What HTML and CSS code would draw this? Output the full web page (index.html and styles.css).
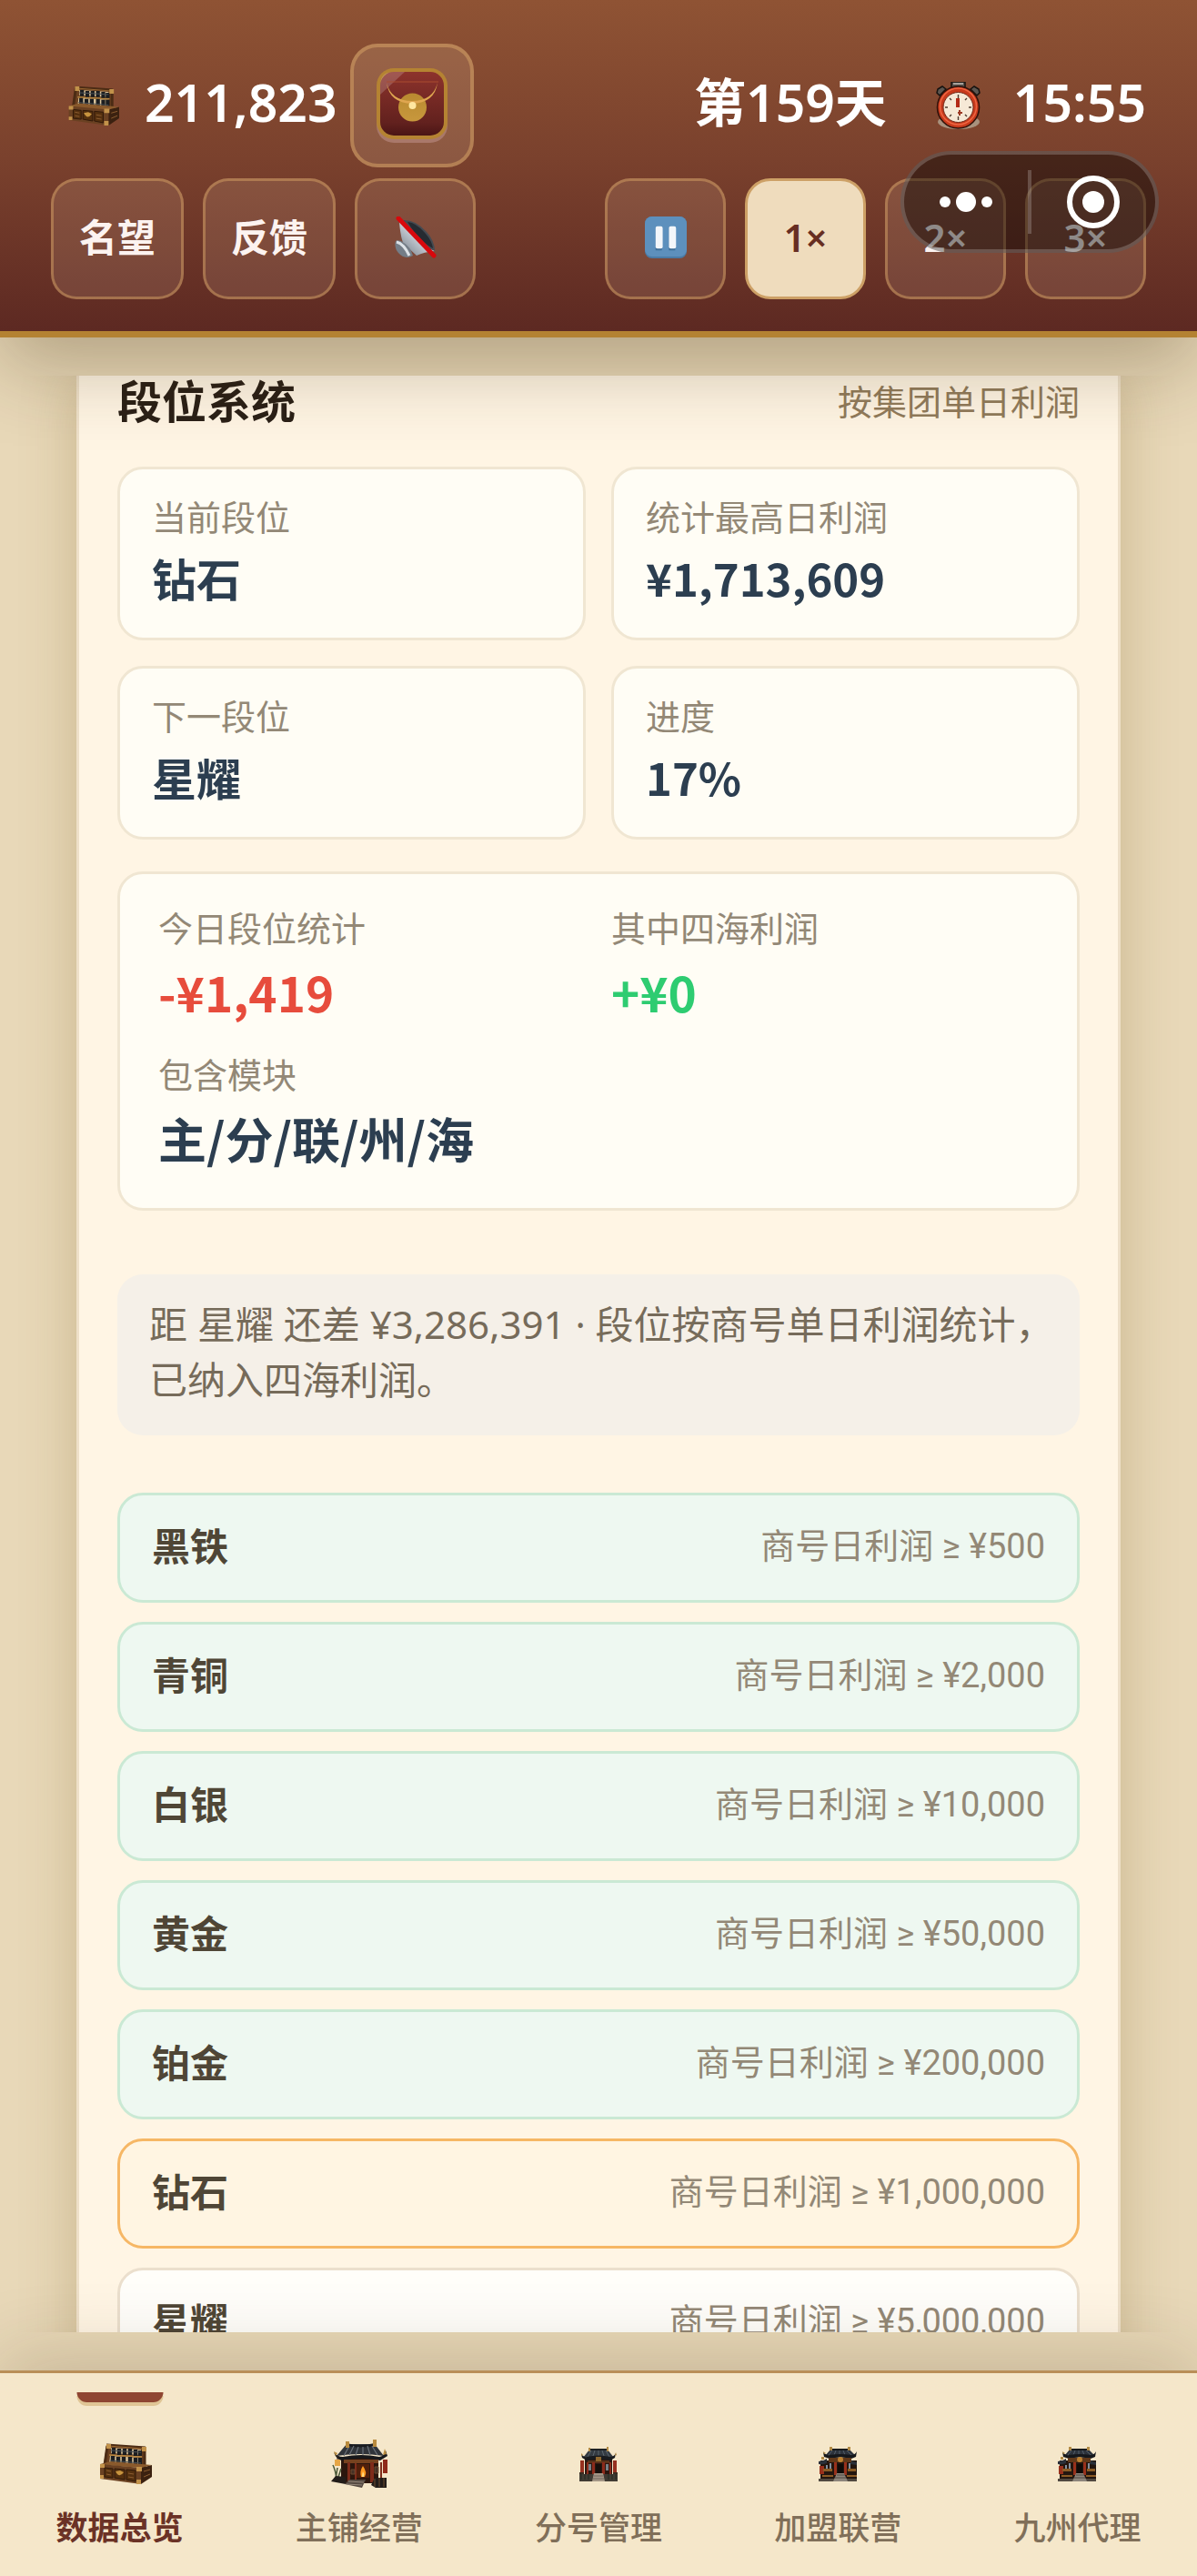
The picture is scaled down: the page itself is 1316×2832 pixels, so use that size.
FILE: index.html
```html
<!DOCTYPE html>
<html lang="zh-CN">
<head>
    <meta charset="UTF-8">
    <meta name="viewport" content="width=device-width, initial-scale=1.0">
    <title>段位系统</title>
    <link rel="stylesheet" href="styles.css">
</head>
<body>
    <!-- 图标定义 -->
    <svg class="icon-defs" aria-hidden="true">
        <symbol id="icon-abacus" viewBox="-14 0 71 44">
            <path d="M7 1 50 4 50 26 4 23Z" fill="#6b4020"/>
            <path d="M12 4 45 6 45 12 12 10Z" fill="#d9c39a"/>
            <path d="M11 13 45 15 45 24 10 22Z" fill="#d9c39a"/>
            <path d="M10 12 46 14" stroke="#b98a42" stroke-width="1.5"/>
            <path d="M15 4v7M21 5v7M27 5v7M33 5v7M39 6v7M44 7v6M14 13v9M20 14v9M26 14v9M33 14v10M39 15v9M44 15v9" stroke="#1b1d20" stroke-width="4.4"/>
            <path d="M12 7 45 9M11 18 45 21" stroke="#4a5055" stroke-width="1"/>
            <path d="M7 1 50 4M8 2 5 23M49 4V26" stroke="#4b2b14" stroke-width="3" fill="none"/>
            <path d="M9 2 48 5" stroke="#9a6832" stroke-width="1"/>
            <path d="M0 22 45 26 45 44 0 38Z" fill="#6a4122"/>
            <path d="M45 26 57 23 57 36 45 44Z" fill="#3b2110"/>
            <path d="M0 22 12 19 57 23 45 26Z" fill="#8a5a2c"/>
            <path d="M5 26 14 27 14 37 5 36ZM16 27 27 28 27 39 16 37ZM29 28 39 29 39 41 29 39Z" fill="#54300f" stroke="#2f1909"/>
            <path d="M7 29 12 30M7 33 12 34M31 32 37 33M31 36 37 37M48 30 55 28M48 36 55 33" stroke="#8b5c30" stroke-width="1"/>
            <path d="M17 30q4 8 9 1l-4-2z" fill="#c7943f"/>
            <path d="M0 22h5v4H0zM0 34h4v4H0zM40 25h6v5h-6zM40 39h5v5h-5zM7 0h5v5H7zM46 3h5v5h-5z" fill="#c2924a"/>
        </symbol>
        <symbol id="icon-shop" viewBox="0 0 62 54">
            <path d="M11 20h41v28H11z" fill="#2c160d"/>
            <path d="M17 5h31l10 13q-26-4-52 0z" fill="#30343a"/>
            <path d="M17 4q14 4 31 0v3q-16 3-31 0z" fill="#191b1f"/>
            <path d="M20 7 14 18M25 7 20 17M30 8 27 17M35 8v9M40 7l3 10M45 7l6 10" stroke="#6a7179" stroke-width="1.2"/>
            <path d="M3 14q4 5 10 5 20-4 40 0 6-1 7-7l2 6-8 5q-20-5-41 0-7 0-10-9z" fill="#17181b"/>
            <path d="M16 2h4v7h-4zM46 0h4v8h-4zM3 13l4 2-2 3zM59 10l2 6-4 1z" fill="#b98b3e"/>
            <path d="M14 22h38v4H14z" fill="#76421f"/>
            <path d="M18 25h3v21h-3zM43 25h4v22h-4zM26 26h2v18h-2zM54 25h2v20h-2z" fill="#7e2c1a"/>
            <path d="M28 27h14v15H28z" fill="#51200c"/>
            <path d="M33 41q-2-6 2-12 5 7 2 12z" fill="#ff9a1f"/>
            <path d="M34 41q0-3 1-6 2 3 1 6z" fill="#ffe08a"/>
            <path d="M57 22h5v15h-5z" fill="#8f2a1a"/>
            <path d="M7 18v5" stroke="#38281b"/>
            <path d="M4 22h6v7H4z" fill="#e6a645"/>
            <path d="M2 28q3 6 4 16M7 31 5 44M11 32 7 44" stroke="#4f5c3b" stroke-width="1.6" fill="none"/>
            <path d="M0 46l5-6 11 1v8zM44 50l4-8h13v11H49z" fill="#221c19"/>
            <path d="M20 44h18l-4 9-19-4z" fill="#554a42"/>
            <path d="M19 46l17 1M17 49l17 1" stroke="#94877a" stroke-width="1"/>
            <path d="M48 43v9M53 42v10M58 42v10M22 33h4v5h-4zM48 30h4v7h-4z" stroke="#6d4b2f" fill="#453126"/>
        </symbol>
        <symbol id="icon-branch" viewBox="0 0 42 38">
            <path d="M6 12h30v21H6z" fill="#2b1710"/>
            <path d="M11 3h20l7 9q-17-3-34 0z" fill="#343b42"/>
            <path d="M11 2h20v2H11z" fill="#1c2023"/>
            <path d="M13 4 9 11M17 4l-2 6M21 4v6M25 4l2 6M29 4l4 7" stroke="#66717a" stroke-width=".8"/>
            <path d="M2 8q3 4 6 3 13-3 26 0 4 0 6-4l-1 5-5 3q-13-3-26 0l-5-3z" fill="#191b1e"/>
            <path d="M10 1h2v4h-2zM30 0h2v5h-2zM2 7l2 2-2 1zM40 6l1 3-2 1z" fill="#b28a45"/>
            <path d="M9 15h24v3H9z" fill="#59321a"/>
            <path d="M18 11h6v5h-6z" fill="#8f682e"/>
            <path d="M14 17h3v14h-3zM25 17h3v14h-3zM8 17h2v13H8zM33 17h2v13h-2z" fill="#8b2b1b"/>
            <path d="M10 19h3v7h-3zM29 19h3v7h-3z" fill="#777f86"/>
            <path d="M18 19h6v10h-6z" fill="#160f0b"/>
            <path d="M1 15h4v13H1zM37 15h4v13h-4z" fill="#96301f"/>
            <path d="M0 28h5v4H0zM37 28h5v4h-5z" fill="#3a2c20"/>
            <path d="M0 30h42v8H0z" fill="#403b33"/>
            <path d="M2 30v6M6 30v6M10 30v6M32 30v6M36 30v6M40 30v6" stroke="#222a20"/>
            <path d="M16 29h10l2 9H14z" fill="#a49686"/>
            <path d="M16 32h10M15 35h12" stroke="#71675c"/>
        </symbol>
        <symbol id="icon-league" viewBox="0 0 42 38">
            <path d="M2 15h40v21H2z" fill="#23160f"/>
            <path d="M13 3h21l7 7q-17-2-34 0z" fill="#2c323b"/>
            <path d="M13 2h21v2H13z" fill="#15181c"/>
            <path d="M15 4l-4 5M19 4l-2 5M23 4v5M27 4l2 5M31 4l5 5" stroke="#5d6876" stroke-width=".8"/>
            <path d="M5 6q4 4 7 3 12-2 24 0 4 0 6-4l-1 6-5 2q-12-3-24 0l-6-2z" fill="#15171b"/>
            <path d="M12 0h3v4h-3zM32 0h3v4h-3zM5 5l3 2-2 1zM3 11h3v3H3z" fill="#b28a45"/>
            <path d="M0 16q5 0 9-3v5q-5 2-9 1zM35 14q4 3 7 3v3l-7-1z" fill="#2a3039"/>
            <path d="M11 12h25v5H11z" fill="#613819"/>
            <circle cx="24" cy="14" r="3" fill="#bb8032"/>
            <path d="M17 17h3v14h-3zM28 17h3v14h-3zM1 21h5v9H1z" fill="#98301b"/>
            <path d="M12 18h2v9h-2zM33 18h2v9h-2zM8 20h2v5H8z" fill="#83909e"/>
            <path d="M21 19h6v10h-6z" fill="#100b08"/>
            <path d="M5 24h10v3H5zM32 24h9v3h-9zM4 31h12v2H4zM31 31h11v2H31z" fill="#8b5b25"/>
            <path d="M0 35h42v3H0z" fill="#514940"/>
            <path d="M20 29h8l4 9H16z" fill="#8d857b"/>
            <path d="M20 31h9M18 34h12" stroke="#4e4740"/>
        </symbol>
        <symbol id="icon-clock" viewBox="0 0 49 52">
            <ellipse cx="25" cy="44" rx="23" ry="8" fill="#a8917d"/>
            <path d="M17 0h15v7H17z" fill="#55504b" stroke="#171310" stroke-width="1.5"/>
            <path d="M19 2h11" stroke="#a7a19a" stroke-width="2"/>
            <path d="M2 8 7 5 11 8 4 15 1 12ZM47 8 42 5 38 8 45 15 48 12Z" fill="#5c5650" stroke="#171310" stroke-width="1.5"/>
            <circle cx="24.5" cy="28" r="23" fill="#c83a1c" stroke="#32130b" stroke-width="1.6"/>
            <circle cx="24.5" cy="27" r="20" fill="none" stroke="#ee6541" stroke-width="1.5"/>
            <circle cx="24.5" cy="28" r="16.5" fill="#f6e9d6" stroke="#6d2717" stroke-width="1"/>
            <path d="M24.5 14v4M24.5 38v4M10 28h3M36 28h3M15 18l2 2M34 18l-2 2M15 38l2-2M34 38l-2-2" stroke="#4d3c31" stroke-width="1.4"/>
            <path d="M24 18v10" stroke="#b32a17" stroke-width="4"/>
            <path d="M26 31v6M24 34h5" stroke="#9d3a25" stroke-width="2"/>
        </symbol>
        <symbol id="icon-bag" viewBox="0 0 78 82">
            <defs>
                <linearGradient id="bagRed" x1="0" y1="0" x2="0" y2="1">
                    <stop offset="0" stop-color="#8d332c"/>
                    <stop offset=".8" stop-color="#62211e"/>
                    <stop offset="1" stop-color="#4a1515"/>
                </linearGradient>
                <linearGradient id="bagGold" x1="0" y1="0" x2="0" y2="1">
                    <stop offset="0" stop-color="#b98a30"/>
                    <stop offset="1" stop-color="#c8983d"/>
                </linearGradient>
            </defs>
            <rect y="4" width="78" height="78" rx="19" fill="#a9786a"/>
            <rect width="78" height="78" rx="19" fill="#b58332"/>
            <rect x="4" y="4" width="70" height="70" rx="15" fill="url(#bagRed)"/>
            <path d="M4 29V19Q4 4 19 4h12z" fill="#fff" opacity=".18"/>
            <circle cx="39.5" cy="43" r="15.5" fill="url(#bagGold)"/>
            <path d="M11 16q3 22 28 23 25-1 28-23-5 20-28 20Q16 36 11 16" fill="#dfa650"/>
            <path d="M11 15h57" stroke="#a94d30"/>
            <circle cx="39.5" cy="41" r="4" fill="#ffe7a0"/>
        </symbol>
        <symbol id="icon-mute" viewBox="0 0 46 46">
            <defs>
                <linearGradient id="horn" x1="0" y1="1" x2="1" y2="0">
                    <stop offset="0" stop-color="#6d7680"/>
                    <stop offset=".5" stop-color="#c5cbd3"/>
                    <stop offset="1" stop-color="#7a828c"/>
                </linearGradient>
            </defs>
            <path d="M5 6Q20 12 44 38 32 39 24 43L9 29Q6 20 5 6" fill="url(#horn)"/>
            <path d="M8 4Q23 3 35 17q9 10 9 21Q24 32 8 4" fill="#454b52"/>
            <path d="M14 6q10 1 20 13 7 8 8 16Q27 28 14 6" fill="#262b31"/>
            <path d="M1 27q4-2 9 2 7 4 10 14-9 5-16-3-5-6-3-13" fill="#747d87"/>
            <path d="M2 28q8 2 14 15" stroke="#dde2e7" stroke-width="3" fill="none"/>
            <path d="M4 2 43 43" stroke="#d8080c" stroke-width="5" stroke-linecap="round"/>
        </symbol>
        <symbol id="icon-pause" viewBox="0 0 47 47">
            <rect width="47" height="47" rx="8" fill="#4a7ba6"/>
            <rect width="47" height="45" rx="8" fill="#5d90bd"/>
            <path d="M12 13h7v25h-7zM27 13h7v25h-7z" fill="#3f6f99"/>
            <rect x="12" y="11" width="8" height="25" rx="2" fill="#f3f6fa"/>
            <rect x="27" y="11" width="8" height="25" rx="2" fill="#f3f6fa"/>
        </symbol>
    </svg>

    <div class="app">
        <!-- 顶部状态栏 -->
        <header class="topbar">
            <div class="topbar-row">
                <div class="money">
                    <svg class="money-icon"><use href="#icon-abacus"/></svg>
                    <span class="stat">211,823</span>
                    <button class="bag-btn" type="button" aria-label="锦囊">
                        <svg class="bag-icon"><use href="#icon-bag"/></svg>
                    </button>
                </div>
                <div class="date">
                    <span class="stat">第159天</span>
                    <svg class="clock-icon"><use href="#icon-clock"/></svg>
                    <span class="stat">15:55</span>
                </div>
            </div>
            <div class="topbar-row">
                <div class="btn-group">
                    <button class="ctrl-btn wide" type="button">名望</button>
                    <button class="ctrl-btn wide" type="button">反馈</button>
                    <button class="ctrl-btn" type="button" aria-label="静音">
                        <svg class="ctrl-icon"><use href="#icon-mute"/></svg>
                    </button>
                </div>
                <div class="btn-group">
                    <button class="ctrl-btn" type="button" aria-label="暂停">
                        <svg class="ctrl-icon"><use href="#icon-pause"/></svg>
                    </button>
                    <button class="ctrl-btn active" type="button">1×</button>
                    <button class="ctrl-btn" type="button">2×</button>
                    <button class="ctrl-btn" type="button">3×</button>
                </div>
            </div>

            <!-- 小程序胶囊按钮 -->
            <div class="capsule">
                <button class="capsule-btn" type="button" aria-label="更多">
                    <svg width="58" height="22" viewBox="0 0 58 22" fill="#fff">
                        <circle cx="6" cy="11" r="6"/>
                        <circle cx="29" cy="11" r="11"/>
                        <circle cx="52" cy="11" r="6"/>
                    </svg>
                </button>
                <button class="capsule-btn" type="button" aria-label="关闭">
                    <svg width="58" height="58" viewBox="0 0 58 58">
                        <circle cx="29" cy="29" r="26" fill="none" stroke="#fff" stroke-width="6"/>
                        <circle cx="29" cy="29" r="12" fill="#fff"/>
                    </svg>
                </button>
            </div>
        </header>

        <!-- 内容区域 -->
        <main class="content">
            <section class="panel">
                <div class="panel-header">
                    <h2 class="panel-title">段位系统</h2>
                    <span class="panel-sub">按集团单日利润</span>
                </div>

                <div class="card-grid">
                    <div class="card">
                        <div class="label">当前段位</div>
                        <div class="value">钻石</div>
                    </div>
                    <div class="card">
                        <div class="label">统计最高日利润</div>
                        <div class="value">¥1,713,609</div>
                    </div>
                    <div class="card">
                        <div class="label">下一段位</div>
                        <div class="value">星耀</div>
                    </div>
                    <div class="card">
                        <div class="label">进度</div>
                        <div class="value">17%</div>
                    </div>
                </div>

                <div class="summary">
                    <div>
                        <div class="label">今日段位统计</div>
                        <div class="summary-value negative">-¥1,419</div>
                    </div>
                    <div>
                        <div class="label">其中四海利润</div>
                        <div class="summary-value positive">+¥0</div>
                    </div>
                    <div>
                        <div class="label">包含模块</div>
                        <div class="summary-value">主/分/联/州/海</div>
                    </div>
                </div>

                <p class="note">距 星耀 还差 ¥3,286,391 · 段位按商号单日利润统计，已纳入四海利润。</p>

                <ul class="rank-list">
                    <li class="rank reached"><span class="rank-name">黑铁</span><span class="rank-cond">商号日利润 ≥ ¥500</span></li>
                    <li class="rank reached"><span class="rank-name">青铜</span><span class="rank-cond">商号日利润 ≥ ¥2,000</span></li>
                    <li class="rank reached"><span class="rank-name">白银</span><span class="rank-cond">商号日利润 ≥ ¥10,000</span></li>
                    <li class="rank reached"><span class="rank-name">黄金</span><span class="rank-cond">商号日利润 ≥ ¥50,000</span></li>
                    <li class="rank reached"><span class="rank-name">铂金</span><span class="rank-cond">商号日利润 ≥ ¥200,000</span></li>
                    <li class="rank current"><span class="rank-name">钻石</span><span class="rank-cond">商号日利润 ≥ ¥1,000,000</span></li>
                    <li class="rank"><span class="rank-name">星耀</span><span class="rank-cond">商号日利润 ≥ ¥5,000,000</span></li>
                </ul>
            </section>
        </main>

        <!-- 底部导航 -->
        <nav class="tabbar">
            <a href="#overview" class="tab active">
                <svg class="tab-icon"><use href="#icon-abacus"/></svg>
                <span>数据总览</span>
            </a>
            <a href="#shop" class="tab">
                <svg class="tab-icon medium"><use href="#icon-shop"/></svg>
                <span>主铺经营</span>
            </a>
            <a href="#branch" class="tab">
                <svg class="tab-icon small"><use href="#icon-branch"/></svg>
                <span>分号管理</span>
            </a>
            <a href="#league" class="tab">
                <svg class="tab-icon small"><use href="#icon-league"/></svg>
                <span>加盟联营</span>
            </a>
            <a href="#agent" class="tab">
                <svg class="tab-icon small"><use href="#icon-league"/></svg>
                <span>九州代理</span>
            </a>
        </nav>
    </div>
</body>
</html>
```
FILE: styles.css
```css
* {
    margin: 0;
    padding: 0;
    box-sizing: border-box;
}

body {
    font-family: 'Noto Sans', 'Noto Sans CJK SC', sans-serif;
    background: #e8d8b8;
    color: #2c3e50;
}

button {
    font-family: inherit;
    cursor: pointer;
}

svg {
    display: block;
}

.icon-defs {
    position: absolute;
    width: 0;
    height: 0;
}

.app {
    height: 100vh;
    display: flex;
    flex-direction: column;
    overflow: hidden;
}

/* 顶部状态栏 */
.topbar {
    position: relative;
    z-index: 10;
    display: flex;
    flex-direction: column;
    gap: 12px;
    padding: 48px 56px 35px;
    background: linear-gradient(180deg, #8f5334 0%, #7a412d 48%, #5d2922 100%);
    border-bottom: 7px solid #b48232;
    box-shadow: 0 28px 84px rgba(60, 40, 10, 0.32);
}

.topbar-row {
    display: flex;
    justify-content: space-between;
    align-items: center;
}

.money,
.date {
    display: flex;
    align-items: center;
}

.stat {
    font-size: 57px;
    line-height: 64px;
    font-weight: 600;
    color: #fff;
    padding-bottom: 8px;
}

.money {
    padding-left: 6px;
}

.money-icon {
    width: 69px;
    height: 43px;
    margin-right: 28px;
}

.bag-btn {
    width: 136px;
    height: 136px;
    margin-left: 14px;
    display: flex;
    justify-content: center;
    align-items: center;
    background: rgba(255, 235, 200, 0.14);
    border: 4px solid rgba(212, 160, 100, 0.55);
    border-radius: 30px;
}

.bag-icon {
    width: 78px;
    height: 82px;
}

.clock-icon {
    width: 49px;
    height: 52px;
    margin: 0 36px 0 54px;
}

.btn-group {
    display: flex;
    gap: 21px;
}

.ctrl-btn {
    width: 133px;
    height: 133px;
    padding-bottom: 4px;
    display: flex;
    justify-content: center;
    align-items: center;
    font-size: 42px;
    line-height: 56px;
    font-weight: 600;
    color: #fcf3f0;
    background: rgba(255, 225, 195, 0.13);
    border: 3px solid rgba(212, 160, 100, 0.5);
    border-radius: 28px;
}

.ctrl-btn.wide {
    width: 146px;
}

.ctrl-btn.active {
    color: #672e22;
    background: #efdcbd;
    border-color: #cda066;
}

.ctrl-icon {
    width: 46px;
    height: 46px;
}

.capsule {
    position: absolute;
    top: 166px;
    right: 42px;
    width: 284px;
    height: 112px;
    display: flex;
    align-items: center;
    background: rgba(0, 0, 0, 0.43);
    border: 4px solid rgba(255, 255, 255, 0.2);
    border-radius: 56px;
}

.capsule-btn {
    flex: 1;
    height: 70px;
    display: flex;
    justify-content: center;
    align-items: center;
    background: none;
    border: none;
}

.capsule-btn + .capsule-btn {
    border-left: 4px solid rgba(255, 255, 255, 0.2);
}

/* 内容区域 */
.content {
    flex: 1;
    min-height: 0;
    margin: 42px 0;
    padding: 0 84px;
    overflow: hidden;
}

.panel {
    min-height: 100%;
    padding: 0 42px 42px;
    background: #fff5e4;
    border: 3px solid #eee0c9;
    border-top: none;
    box-shadow: 0 0 56px rgba(120, 90, 30, 0.28);
}

.panel-header {
    display: flex;
    justify-content: space-between;
    align-items: center;
    height: 56px;
    margin-bottom: 44px;
}

.panel-title {
    font-size: 49px;
    line-height: 56px;
    font-weight: 700;
    color: #2b2017;
}

.panel-sub {
    font-size: 38px;
    line-height: 60px;
    color: #917b5b;
}

.card-grid {
    display: grid;
    grid-template-columns: 1fr 1fr;
    gap: 28px;
    margin-bottom: 35px;
}

.card,
.summary {
    background: #fffdf5;
    border: 3px solid #f0e6d2;
    border-radius: 28px;
}

.card {
    height: 191px;
    padding: 24px 35px;
}

.label {
    font-size: 38px;
    line-height: 56px;
    color: #938876;
}

.value,
.summary-value {
    font-family: 'Noto Sans CJK SC', sans-serif;
    line-height: 70px;
    font-weight: 700;
}

.value {
    margin-top: 4px;
    font-size: 49px;
}

.summary {
    display: grid;
    grid-template-columns: 1fr 1fr;
    gap: 28px;
    padding: 31px 42px 42px;
    margin-bottom: 70px;
}

.summary-value {
    margin-top: 7px;
    font-size: 53px;
}

.summary-value.negative {
    color: #e74c3c;
}

.summary-value.positive {
    color: #2ecc71;
}

.note {
    padding: 24px 24px 31px 35px;
    margin-bottom: 63px;
    font-size: 42px;
    line-height: 61px;
    color: #766b5a;
    background: #f5f0e8;
    border-radius: 28px;
}

.rank-list {
    list-style: none;
    display: flex;
    flex-direction: column;
    gap: 21px;
}

.rank {
    display: flex;
    justify-content: space-between;
    align-items: center;
    height: 121px;
    padding: 0 35px 4px;
    line-height: 56px;
    background: #fffefa;
    border: 3px solid #ebdfcd;
    border-radius: 28px;
}

.rank.reached {
    background: #eef8f1;
    border-color: #cae9d4;
}

.rank.current {
    background: #fff5e2;
    border-color: #f6b765;
}

.rank-name {
    font-size: 42px;
    font-weight: 700;
    color: #4f4636;
}

.rank-cond {
    font-family: Roboto, 'Noto Sans CJK SC', sans-serif;
    font-size: 38px;
    color: #938876;
}

/* 底部导航 */
.tabbar {
    position: relative;
    z-index: 10;
    display: flex;
    height: 226px;
    padding-top: 21px;
    background: #f5e7ca;
    border-top: 3px solid #b98f58;
    box-shadow: 0 -14px 84px rgba(60, 40, 10, 0.2);
}

.tab {
    position: relative;
    flex: 1;
    display: flex;
    flex-direction: column;
    align-items: center;
    padding-top: 50px;
    font-size: 35px;
    line-height: 42px;
    font-weight: 500;
    color: #806f59;
    text-decoration: none;
}

.tab span {
    margin-top: 20px;
}

.tab.active {
    font-weight: 700;
    color: #6b3226;
}

/* 当前页签标记 */
.tab.active::before {
    content: '';
    position: absolute;
    top: 0;
    left: 50%;
    width: 95px;
    height: 11px;
    transform: translateX(-50%);
    background: #8f4632;
    border-radius: 0 0 11px 11px;
    box-shadow: 0 4px 0 #e0c595;
}

.tab-icon {
    width: 71px;
    height: 58px;
}

.tab-icon.medium {
    width: 62px;
}

.tab-icon.small {
    width: 42px;
}
```
